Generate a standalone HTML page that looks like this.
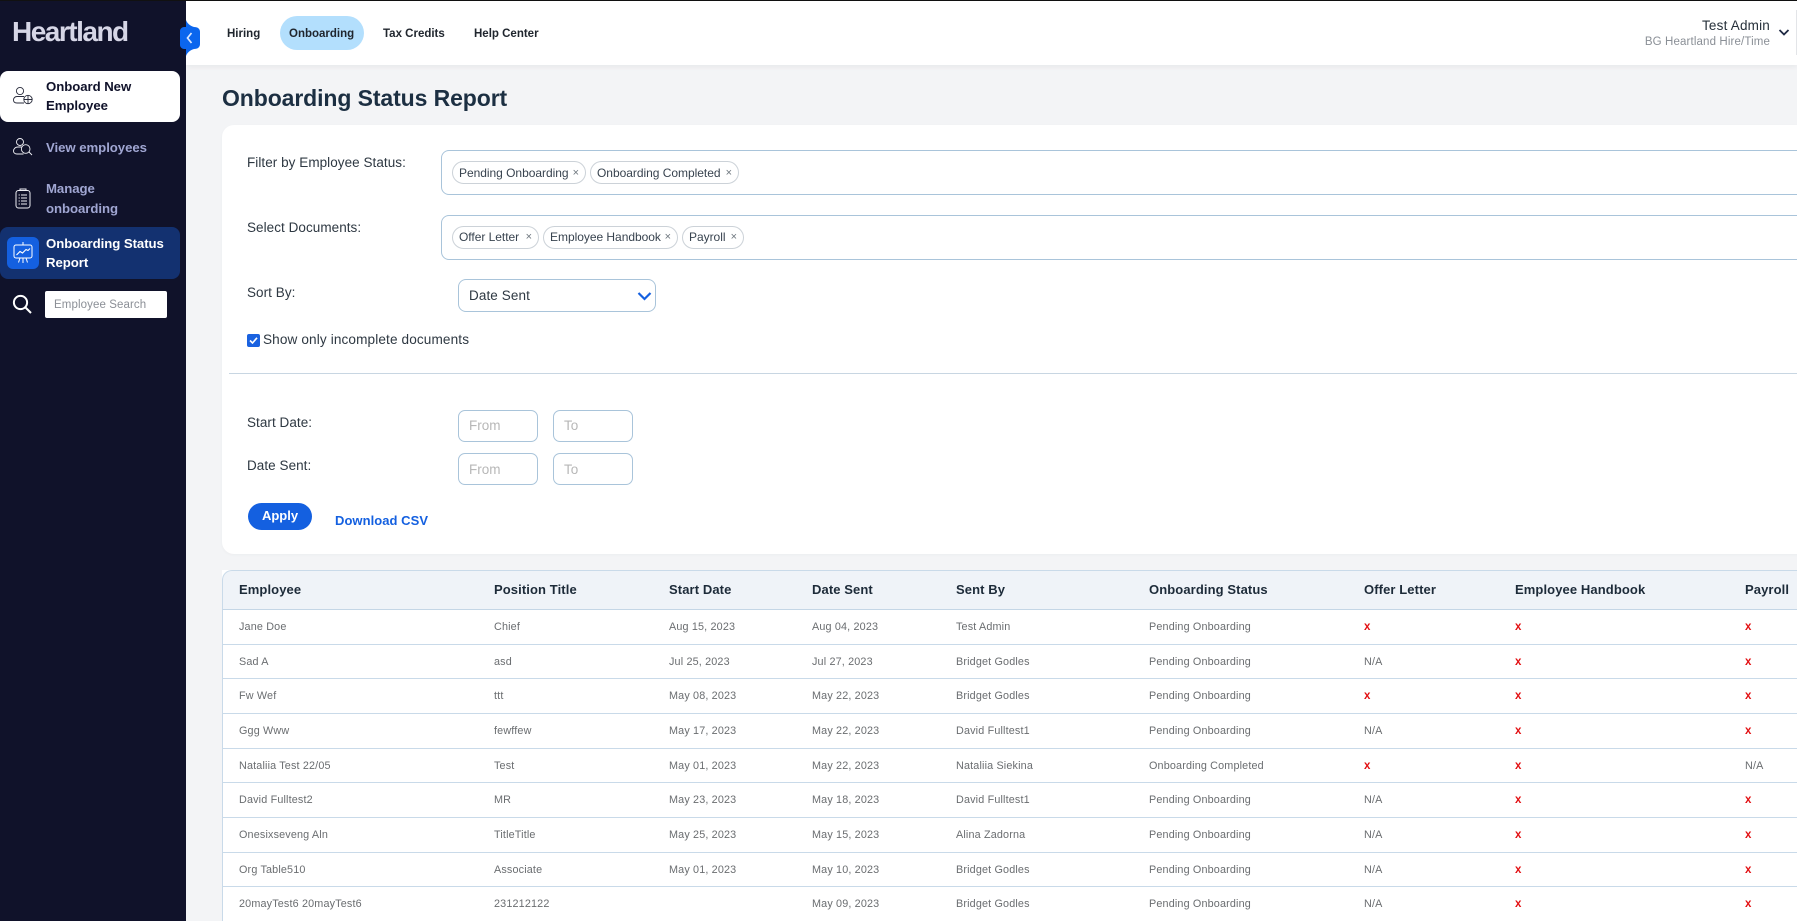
<!DOCTYPE html>
<html lang="en"><head><meta charset="utf-8"><title>Onboarding Status Report</title>
<style>
*{box-sizing:border-box;margin:0;padding:0}
html,body{width:1797px;height:921px;overflow:hidden;background:#f3f4f6;font-family:"Liberation Sans",Arial,sans-serif}
#root{position:relative;width:1797px;height:921px;overflow:hidden}
.a{position:absolute;white-space:nowrap}
.side{left:0;top:1px;width:186px;height:920px;background:#10122a}
.nav{font-size:11.5px;font-weight:700;color:#20262e;line-height:16px;top:26px}
.si{left:46px;font-size:13.2px;font-weight:700;line-height:19px;letter-spacing:-.05px}
.lb{left:247px;font-size:13.5px;line-height:18px;color:#2e3842;letter-spacing:.05px}
.box{border:1px solid #a9c4da;background:#fff}
.chip{top:0;height:23px;border:1px solid #ccd2d8;border-radius:12px;font-size:12px;line-height:21px;padding-left:6px;color:#38434f;background:#fff;letter-spacing:-.03px}
.chip i{position:absolute;right:6px;top:0;font-style:normal;font-size:11px;color:#6c757d}
.ph{font-size:13.5px;color:#b7b7b7;line-height:18px}
table{position:absolute;left:222px;top:570px;width:1640px;border-collapse:separate;border-spacing:0;table-layout:fixed;background:#fff}
th{font-size:13px;font-weight:700;color:#1d2b39;text-align:left;background:#eff3f8;height:40px;border-top:1px solid #c9dae9;border-bottom:1px solid #c4d6e6;letter-spacing:.1px;padding:0 0 2px;overflow:visible;white-space:nowrap}
td{font-size:10.8px;color:#6a6d70;border-bottom:1px solid #c9dae9;padding:0;white-space:nowrap;letter-spacing:.16px}
th:first-child,td:first-child{padding-left:16px;border-left:1px solid #c9dae9}
th:first-child{border-top-left-radius:10px}
td b{color:#e20f12;font-size:11.5px;font-weight:700}
</style></head><body><div id="root">

<div class="a" style="left:0;top:0;width:1797px;height:1px;background:#111"></div>

<!-- header -->
<div class="a" style="left:186px;top:1px;width:1611px;height:64px;background:#fff;box-shadow:0 2px 5px rgba(0,0,0,.05)"></div>
<div class="a nav" style="left:227px">Hiring</div>
<div class="a" style="left:280px;top:16px;width:84px;height:34px;border-radius:17px;background:#b3dffd"></div>
<div class="a nav" style="left:289px">Onboarding</div>
<div class="a nav" style="left:383px">Tax Credits</div>
<div class="a nav" style="left:474px">Help Center</div>
<div class="a" style="right:27px;top:17px;font-size:13.5px;line-height:17px;color:#26303a;letter-spacing:.2px">Test Admin</div>
<div class="a" style="right:27px;top:35px;font-size:11.5px;line-height:15px;color:#8a8f96;letter-spacing:.13px">BG Heartland Hire/Time</div>
<svg class="a" style="left:1778px;top:28px" width="12" height="9" viewBox="0 0 12 9"><path d="M1.5 2 6 6.5 10.5 2" fill="none" stroke="#1f2a44" stroke-width="1.8"/></svg>
<div class="a" style="left:1796px;top:10px;width:1px;height:45px;background:#e3e5e8"></div>

<!-- sidebar -->
<div class="a side"></div>
<div class="a" style="left:12px;top:14px;font-size:28px;font-weight:700;line-height:36px;color:#d6d6e6;letter-spacing:-1.5px">Heartland</div>
<svg class="a" style="left:180px;top:20px" width="20" height="36" viewBox="0 0 20 36"><path d="M6 0C7 3 10 6 14 7 18 7 20 9 20 12V24C20 27 18 29 14 29 10 30 7 33 6 36V29H4C2 29 0 27 0 25V11C0 9 2 7 4 7H6Z" fill="#0b66ee"/><path d="M11.5 13 7.5 18 11.5 23" fill="none" stroke="#dbe8ff" stroke-width="1.7"/></svg>

<div class="a" style="left:0;top:71px;width:180px;height:51px;background:#fff;border-radius:8px"></div>
<svg class="a" style="left:12px;top:86px" width="22" height="20" viewBox="0 0 22 20" fill="none" stroke="#2a2d3d" stroke-width=".9"><circle cx="8" cy="5" r="3.6"/><path d="M12 10.5H5C3 10.5 1.5 12 1.5 14S3 17 5 17H12"/><circle cx="16" cy="13.5" r="4.2"/><path d="M16 9.5V17.5M12 13.5H20"/></svg>
<div class="a si" style="top:77px;color:#10122a">Onboard New<br>Employee</div>

<svg class="a" style="left:12px;top:137px" width="22" height="20" viewBox="0 0 22 20" fill="none" stroke="#f0f0f5" stroke-width=".9"><circle cx="8" cy="5" r="3.5"/><path d="M9.5 17H5C3 17 1.5 15.8 1.5 14S3 10 6 10H9.5"/><circle cx="13.7" cy="12" r="4.3"/><path d="M17 15 20 18M9.5 17H11.5"/></svg>
<div class="a si" style="top:137.5px;color:#a0a6d2">View employees</div>

<svg class="a" style="left:15px;top:188px" width="16" height="21" viewBox="0 0 16 21" fill="none" stroke="#f0f0f5" stroke-width="1"><rect x="1" y="2.5" width="14" height="17.5" rx="2.5"/><path d="M5 2.5V1H11V2.5M6 7H12M6 10H12M6 13H12M6 16H12M3.6 7H4.8M3.6 10H4.8M3.6 13H4.8M3.6 16H4.8"/></svg>
<div class="a si" style="top:179px;color:#a0a6d2;line-height:20px">Manage<br>onboarding</div>

<div class="a" style="left:0;top:227px;width:180px;height:52px;background:#133170;border-radius:8px"></div>
<div class="a" style="left:7px;top:237px;width:32px;height:32px;background:#1460e0;border-radius:6px"></div>
<svg class="a" style="left:12px;top:241px" width="22" height="24" viewBox="0 0 22 24" fill="none" stroke="#fff" stroke-width="1"><path d="M11 1V4"/><rect x="2" y="4" width="18" height="13" rx="2"/><path d="M4.5 14 8 10.5 10.5 12 14 8.5 16 9.5 18 7.5" stroke-width="1.1"/><path d="M11 17V22M8 17 6.5 21.5M14 17 15.5 21.5"/></svg>
<div class="a si" style="top:234px;color:#fff">Onboarding Status<br>Report</div>

<svg class="a" style="left:12px;top:294px" width="21" height="21" viewBox="0 0 21 21" fill="none" stroke="#fff" stroke-width="2"><circle cx="8.5" cy="8.5" r="6.6"/><path d="M13.5 13.5 19 19"/></svg>
<div class="a" style="left:45px;top:291px;width:122px;height:27px;background:#fff;border-radius:2px;font-size:11.5px;line-height:28px;padding-left:9px;color:#8b8f96;letter-spacing:.1px">Employee Search</div>

<!-- main -->
<div class="a" style="left:222px;top:83px;font-size:23px;font-weight:700;line-height:30px;color:#1c2f42;letter-spacing:-.1px">Onboarding Status Report</div>
<div class="a" style="left:222px;top:125px;width:1640px;height:429px;background:#fff;border-radius:12px;box-shadow:0 1px 3px rgba(0,0,0,.03)"></div>

<div class="a lb" style="top:154px">Filter by Employee Status:</div>
<div class="a box" style="left:441px;top:150px;width:1400px;height:45px;border-radius:8px"></div>
<div class="a" style="left:0;top:161px">
  <div class="a chip" style="left:452px;width:134px;line-height:22px">Pending Onboarding<i>×</i></div>
  <div class="a chip" style="left:590px;width:149px;line-height:22px">Onboarding Completed<i>×</i></div>
</div>

<div class="a lb" style="top:219px">Select Documents:</div>
<div class="a box" style="left:441px;top:215px;width:1400px;height:45px;border-radius:8px"></div>
<div class="a" style="left:0;top:226px">
  <div class="a chip" style="left:452px;width:87px">Offer Letter<i>×</i></div>
  <div class="a chip" style="left:543px;width:135px">Employee Handbook<i>×</i></div>
  <div class="a chip" style="left:682px;width:62px">Payroll<i>×</i></div>
</div>

<div class="a lb" style="top:284px">Sort By:</div>
<div class="a box" style="left:458px;top:279px;width:198px;height:33px;border-radius:8px"></div>
<div class="a" style="left:469px;top:287px;font-size:13.5px;line-height:18px;color:#2e3842;letter-spacing:.1px">Date Sent</div>
<svg class="a" style="left:637px;top:290px" width="15" height="12" viewBox="0 0 15 12"><path d="M1.5 3 7.5 9 13.5 3" fill="none" stroke="#1460e0" stroke-width="2.2"/></svg>

<svg class="a" style="left:247px;top:334px" width="13" height="13" viewBox="0 0 13 13"><rect width="13" height="13" rx="2" fill="#1a62e0"/><path d="M3 6.5 5.5 9 10 3.8" fill="none" stroke="#fff" stroke-width="1.6"/></svg>
<div class="a" style="left:263px;top:331px;font-size:13.6px;line-height:18px;color:#2e3842;letter-spacing:.12px">Show only incomplete documents</div>

<div class="a" style="left:229px;top:373px;width:1600px;height:1px;background:#c8d6e2"></div>

<div class="a lb" style="top:414px">Start Date:</div>
<div class="a box" style="left:458px;top:410px;width:80px;height:32px;border-radius:7px"></div>
<div class="a box" style="left:553px;top:410px;width:80px;height:32px;border-radius:7px"></div>
<div class="a ph" style="left:469px;top:417px">From</div>
<div class="a ph" style="left:564px;top:417px">To</div>

<div class="a lb" style="top:457px">Date Sent:</div>
<div class="a box" style="left:458px;top:453px;width:80px;height:32px;border-radius:7px"></div>
<div class="a box" style="left:553px;top:453px;width:80px;height:32px;border-radius:7px"></div>
<div class="a ph" style="left:469px;top:461px">From</div>
<div class="a ph" style="left:564px;top:461px">To</div>

<div class="a" style="left:248px;top:503px;width:64px;height:27px;background:#1460e0;border-radius:14px;color:#fff;font-size:13px;font-weight:700;line-height:26px;text-align:center">Apply</div>
<div class="a" style="left:335px;top:512px;font-size:13px;font-weight:700;line-height:18px;color:#1460e0;letter-spacing:.05px">Download CSV</div>

<!-- table -->
<table>
<colgroup><col style="width:272px"><col style="width:175px"><col style="width:143px"><col style="width:144px"><col style="width:193px"><col style="width:215px"><col style="width:151px"><col style="width:230px"><col style="width:117px"></colgroup>
<tr><th>Employee</th><th>Position Title</th><th>Start Date</th><th>Date Sent</th><th>Sent By</th><th>Onboarding Status</th><th>Offer Letter</th><th>Employee Handbook</th><th>Payroll</th></tr>
<tr style="height:35px"><td>Jane Doe</td><td>Chief</td><td>Aug 15, 2023</td><td>Aug 04, 2023</td><td>Test Admin</td><td>Pending Onboarding</td><td><b>x</b></td><td><b>x</b></td><td><b>x</b></td></tr>
<tr style="height:34px"><td>Sad A</td><td>asd</td><td>Jul 25, 2023</td><td>Jul 27, 2023</td><td>Bridget Godles</td><td>Pending Onboarding</td><td>N/A</td><td><b>x</b></td><td><b>x</b></td></tr>
<tr style="height:35px"><td>Fw Wef</td><td>ttt</td><td>May 08, 2023</td><td>May 22, 2023</td><td>Bridget Godles</td><td>Pending Onboarding</td><td><b>x</b></td><td><b>x</b></td><td><b>x</b></td></tr>
<tr style="height:35px"><td>Ggg Www</td><td>fewffew</td><td>May 17, 2023</td><td>May 22, 2023</td><td>David Fulltest1</td><td>Pending Onboarding</td><td>N/A</td><td><b>x</b></td><td><b>x</b></td></tr>
<tr style="height:34px"><td>Nataliia Test 22/05</td><td>Test</td><td>May 01, 2023</td><td>May 22, 2023</td><td>Nataliia Siekina</td><td>Onboarding Completed</td><td><b>x</b></td><td><b>x</b></td><td>N/A</td></tr>
<tr style="height:35px"><td>David Fulltest2</td><td>MR</td><td>May 23, 2023</td><td>May 18, 2023</td><td>David Fulltest1</td><td>Pending Onboarding</td><td>N/A</td><td><b>x</b></td><td><b>x</b></td></tr>
<tr style="height:35px"><td>Onesixseveng Aln</td><td>TitleTitle</td><td>May 25, 2023</td><td>May 15, 2023</td><td>Alina Zadorna</td><td>Pending Onboarding</td><td>N/A</td><td><b>x</b></td><td><b>x</b></td></tr>
<tr style="height:34px"><td>Org Table510</td><td>Associate</td><td>May 01, 2023</td><td>May 10, 2023</td><td>Bridget Godles</td><td>Pending Onboarding</td><td>N/A</td><td><b>x</b></td><td><b>x</b></td></tr>
<tr style="height:35px"><td>20mayTest6 20mayTest6</td><td>231212122</td><td></td><td>May 09, 2023</td><td>Bridget Godles</td><td>Pending Onboarding</td><td>N/A</td><td><b>x</b></td><td><b>x</b></td></tr>
</table>
</div></body></html>
